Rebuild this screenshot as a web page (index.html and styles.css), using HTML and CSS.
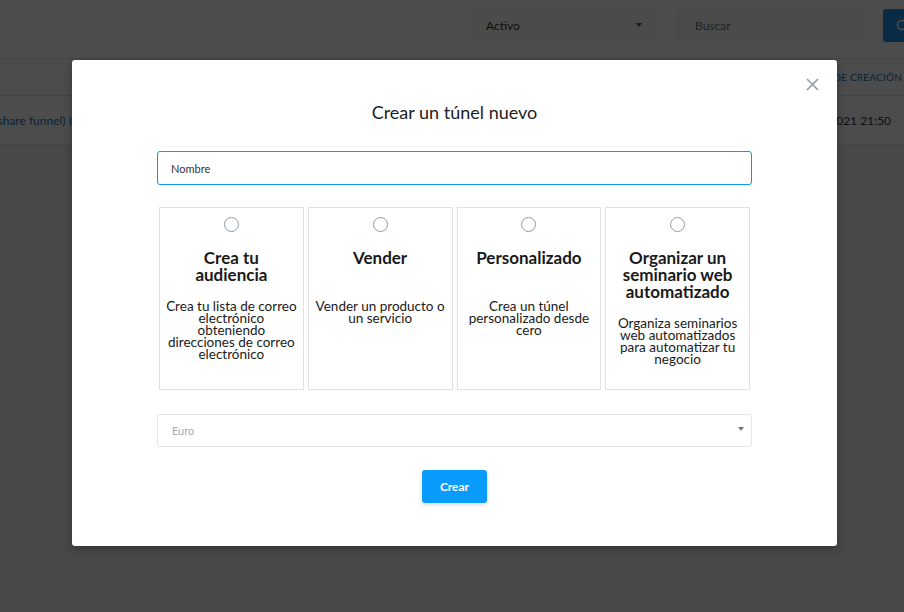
FILE: index.html
```html
<!DOCTYPE html>
<html lang="es">

<head>
    <meta charset="UTF-8" />
    <meta name="viewport" content="width=device-width, initial-scale=1.0" />
    <title>Túneles</title>
    <link rel="stylesheet" href="styles.css">
</head>

<body>
    <div class="page">
        <header class="toolbar">
            <div class="filter">
                <span>Activo</span>
                <span class="caret"></span>
            </div>
            <div class="search">Buscar</div>
            <button class="search-btn" aria-label="Buscar">
                <svg width="14" height="14" viewBox="0 0 14 14">
                    <circle cx="6" cy="6" r="4.5" stroke="#fff" stroke-width="1.6" fill="none" />
                    <path d="M9.3 9.3 L13 13" stroke="#fff" stroke-width="1.6" />
                </svg>
            </button>
        </header>

        <div class="table">
            <div class="thead">
                <span class="th-date">FECHA DE CREACIÓN</span>
            </div>
            <div class="trow">
                <div class="cell-name"><span>Mi primer túnel (share funnel) I</span></div>
                <div class="cell-date">12.03.2021 21:50</div>
            </div>
        </div>
    </div>

    <div class="overlay">
        <div class="modal">
            <button class="close" aria-label="Cerrar">
                <svg width="13" height="13" viewBox="0 0 13 13">
                    <path d="M1 1 L12 12 M12 1 L1 12" stroke="#8d9cab" stroke-width="1.6" fill="none" />
                </svg>
            </button>

            <h2 class="title">Crear un túnel nuevo</h2>

            <input type="text" class="name-input" placeholder="Nombre" />

            <div class="types">
                <label class="type-card">
                    <span class="radio"></span>
                    <span class="type-title">Crea tu audiencia</span>
                    <span class="type-desc">Crea tu lista de correo electrónico obteniendo direcciones de correo electrónico</span>
                </label>
                <label class="type-card">
                    <span class="radio"></span>
                    <span class="type-title">Vender</span>
                    <span class="type-desc">Vender un producto o un servicio</span>
                </label>
                <label class="type-card">
                    <span class="radio"></span>
                    <span class="type-title">Personalizado</span>
                    <span class="type-desc">Crea un túnel personalizado desde cero</span>
                </label>
                <label class="type-card">
                    <span class="radio"></span>
                    <span class="type-title">Organizar un seminario web automatizado</span>
                    <span class="type-desc">Organiza seminarios web automatizados para automatizar tu negocio</span>
                </label>
            </div>

            <div class="currency">
                <span>Euro</span>
                <span class="caret"></span>
            </div>

            <div class="actions">
                <button class="create">Crear</button>
            </div>
        </div>
    </div>
</body>

</html>
```

FILE: styles.css
```css
*,
::after,
::before {
    box-sizing: border-box;
    padding: 0;
    margin: 0;
}

body {
    width: 904px;
    height: 612px;
    overflow: hidden;
    position: relative;
    background-color: #f0f1f3;
    font-family: Lato, "Open Sans", sans-serif;
    color: #222;
}

/* page behind the modal */
.toolbar {
    height: 59px;
    background-color: #fff;
    border-bottom: 1px solid #e2e4e8;
    display: flex;
    align-items: flex-start;
    padding: 9px 0 0 473px;
    gap: 22px;

    &>* {
        flex-shrink: 0;
    }
}

.filter,
.search {
    height: 32px;
    background-color: #fcfcfd;
    border: 1px solid #eceef0;
    border-radius: 2px;
    font-size: 12px;
    display: flex;
    align-items: center;
    padding: 0 12px;
}

.filter {
    width: 182px;
    justify-content: space-between;
    color: #333;
}

.search {
    width: 183px;
    color: #777;
    padding-left: 17px;
}

.search-btn {
    width: 40px;
    height: 33px;
    margin-left: 1px;
    border: none;
    border-radius: 3px;
    background-color: #1e90e6;
    display: flex;
    align-items: center;
    padding-left: 13px;
}

.caret {
    width: 0;
    height: 0;
    border-left: 3px solid transparent;
    border-right: 3px solid transparent;
    border-top: 4px solid #555;
}

.table {
    background-color: #fff;
}

.thead {
    height: 37px;
    border-bottom: 1px solid #e6e8eb;
    display: flex;
    justify-content: flex-end;
    align-items: center;
    overflow: hidden;
}

.th-date {
    font-size: 10px;
    color: #1478c0;
    white-space: nowrap;
    margin-right: 2px;
    letter-spacing: 0.2px;
}

.trow {
    height: 49px;
    border-bottom: 1px solid #e6e8eb;
    display: flex;
    justify-content: space-between;
    align-items: center;
    font-size: 12px;
}

.cell-name {
    width: 72px;
    overflow: hidden;
    display: flex;
    justify-content: flex-end;
    white-space: nowrap;
    color: #1a78bd;
}

.cell-date {
    white-space: nowrap;
    margin-right: 13px;
    color: #333;
}

/* modal */
.overlay {
    position: absolute;
    inset: 0;
    background-color: rgba(0, 0, 0, 0.7);
}

.modal {
    position: relative;
    width: 765px;
    height: 486px;
    margin: 60px 0 0 72px;
    background-color: #fff;
    border-radius: 3px;
    box-shadow: 0 3px 8px rgba(0, 0, 0, 0.3);
    padding: 40px 85px 0;
}

.close {
    position: absolute;
    top: 18px;
    right: 18px;
    background: none;
    border: none;
    padding: 0;
    display: flex;
}

.title {
    font-size: 18px;
    font-weight: 400;
    line-height: 24px;
    text-align: center;
    color: #1e1e1e;
}

.name-input {
    display: block;
    width: 100%;
    height: 34px;
    margin-top: 27px;
    border: 1px solid #0a97f5;
    border-radius: 3px;
    padding: 0 13px;
    font-family: inherit;
    font-size: 11px;
    outline: none;

    &::placeholder {
        color: #333;
    }
}

.types {
    display: grid;
    grid-template-columns: repeat(4, 1fr);
    gap: 4px;
    margin: 22px 2px 0;
}

.type-card {
    height: 183px;
    border: 1px solid #dde2e7;
    display: flex;
    flex-direction: column;
    align-items: center;
    text-align: center;
    padding: 9px 4px 0;
}

.radio {
    width: 15px;
    height: 15px;
    border: 1px solid #8f9aa6;
    border-radius: 50%;
    flex-shrink: 0;
}

.type-title {
    margin-top: 17px;
    min-height: 34px;
    font-size: 17px;
    font-weight: 700;
    line-height: 17px;
    color: #1a1a1a;
    padding: 0 4px;
}

.type-desc {
    margin-top: 17px;
    font-size: 13.5px;
    line-height: 12px;
    color: #1a1a1a;
}

.currency {
    height: 33px;
    margin-top: 24px;
    border: 1px solid #e4e6e9;
    border-radius: 3px;
    display: flex;
    justify-content: space-between;
    align-items: center;
    padding: 0 7px 0 14px;
    font-size: 11px;
    color: #a3abb4;

    .caret {
        border-top-color: #777;
        margin-top: -3px;
    }
}

.actions {
    display: flex;
    justify-content: center;
    margin-top: 23px;
}

.create {
    width: 65px;
    height: 33px;
    border: none;
    border-radius: 3px;
    background-color: #0a9bff;
    color: #fff;
    font-family: inherit;
    font-size: 12px;
    font-weight: 700;
    box-shadow: 0 2px 4px rgba(0, 0, 0, 0.15);
}
```
